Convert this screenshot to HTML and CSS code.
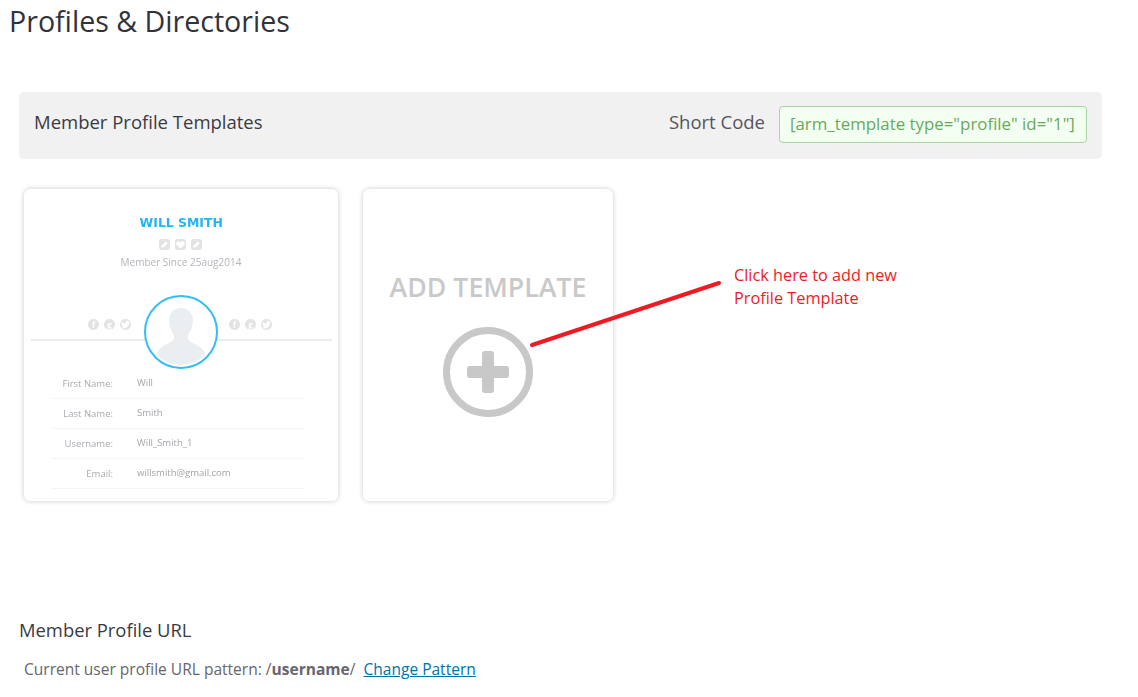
FILE: index.html
```html
<!DOCTYPE html>
<html lang="en">
<head>
<meta charset="utf-8">
<title>Profiles &amp; Directories</title>
<link rel="stylesheet" href="styles.css">
</head>
<body>
<svg class="defs" aria-hidden="true">
  <symbol id="i-bird" viewBox="0 0 12 12"><path d="M11 3.2c-.4.2-.8.3-1.200.3.4-.3.8-.6.9-1.100-.4.200-.9.4-1.300.5a2 2 0 0 0-3.500 1.900C4.200 4.700 2.700 3.900 1.700 2.700c-.5.900-.3 2.100.6 2.700-.3 0-.6-.100-.9-.300 0 1 .7 1.800 1.600 2-.3.100-.6.100-.9 0 .3.800 1 1.400 1.900 1.400C3.100 9.200 2 9.500 1 9.400c3.900 2.200 9-.1 9-5.300.4-.2.700-.5 1-.9z" fill="#fff"/></symbol>
  <symbol id="i-heart" viewBox="0 0 12 12"><path d="M6 10.500 1.800 6.200C.2 4.300 2.700 1.500 4.700 2.800L6 4l1.300-1.200c2-1.300 4.500 1.500 2.900 3.400z" fill="#fff"/></symbol>
  <symbol id="i-pen" viewBox="0 0 12 12"><path d="M2.500 9.500 3 7l4.500-4.500 2 2L5 9z" fill="#fff"/></symbol>
</svg>
<main class="page">
  <h1 class="page-title">Profiles &amp; Directories</h1>
  <section class="bar">
    <h2 class="bar-title">Member Profile Templates</h2>
    <div class="shortcode-group">
      <span class="shortcode-label">Short Code</span>
      <span class="shortcode">[arm_template type="profile" id="1"]</span>
    </div>
  </section>
  <section class="cards">
    <article class="card card-preview">
      <div class="p-name">WILL SMITH</div>
      <div class="p-badges">
        <span class="badge"><svg class="glyph"><use href="#i-pen"/></svg></span>
        <span class="badge"><svg class="glyph"><use href="#i-heart"/></svg></span>
        <span class="badge"><svg class="glyph"><use href="#i-pen"/></svg></span>
      </div>
      <div class="p-since">Member Since 25aug2014</div>
      <div class="p-hero">
        <div class="p-social p-social-left">
          <span class="dot">f</span><span class="dot">g</span><span class="dot"><svg class="glyph"><use href="#i-bird"/></svg></span>
        </div>
        <div class="avatar">
          <svg viewBox="0 0 70 70" class="avatar-svg" aria-hidden="true">
            <path d="M35 11c-7 0-12 5-12 12 0 6 2 11 5 15v3c0 3-5 5-9 7-4 2-7 5-8.500 9A33 33 0 0 0 59.500 57c-1.500-4-4.500-7-8.500-9-4-2-9-4-9-7v-3c3-4 5-9 5-15 0-7-5-12-12-12z" fill="#ebeef0"/>
          </svg>
        </div>
        <div class="p-social">
          <span class="dot">f</span><span class="dot">g</span><span class="dot"><svg class="glyph"><use href="#i-bird"/></svg></span>
        </div>
      </div>
      <dl class="p-fields">
        <div class="p-row"><dt>First Name:</dt><dd>Will</dd></div>
        <div class="p-row"><dt>Last Name:</dt><dd>Smith</dd></div>
        <div class="p-row"><dt>Username:</dt><dd>Will_Smith_1</dd></div>
        <div class="p-row"><dt>Email:</dt><dd>willsmith@gmail.com</dd></div>
      </dl>
    </article>
    <article class="card card-add">
      <div class="add-title">ADD TEMPLATE</div>
      <svg class="add-icon" viewBox="0 0 90 90" aria-hidden="true">
        <circle cx="45" cy="45" r="41.500" fill="none" stroke="#c8c8c8" stroke-width="7"/>
        <rect x="39" y="24" width="12" height="42" rx="3" fill="#c8c8c8"/>
        <rect x="24" y="39" width="42" height="12" rx="3" fill="#c8c8c8"/>
      </svg>
    </article>
  </section>
  <section class="url-section">
    <h2 class="url-title">Member Profile URL</h2>
    <p class="url-text">Current user profile URL pattern: /<b>username</b>/&nbsp; <a href="#" class="url-link">Change Pattern</a></p>
  </section>
  <svg class="arrow" viewBox="0 0 1138 697" aria-hidden="true">
    <line x1="532" y1="345" x2="719" y2="283" stroke="#ed1c24" stroke-width="4" stroke-linecap="round"/>
  </svg>
  <p class="note">Click here to add new<br>Profile Template</p>
</main>
</body>
</html>
```
FILE: styles.css
```css
* { box-sizing: border-box; }
html, body { margin: 0; padding: 0; background: #fff; }
body { font-family: "Open Sans", "Liberation Sans", sans-serif; color: #32323a; overflow: hidden; }
.defs { display: none; }
.page { position: relative; width: 1138px; height: 697px; }

.page-title {
  margin: 0;
  padding: 2px 0 0 9px;
  height: 92px;
  font-size: 28.6px;
  line-height: 38px;
  font-weight: 400;
  color: #32323a;
}

.bar {
  margin-left: 19px;
  width: 1083px;
  height: 67px;
  padding: 14px 15px 0;
  background: #f1f1f1;
  border-radius: 5px;
  display: flex;
  align-items: flex-start;
  justify-content: space-between;
}
.bar-title { margin: 4px 0 0; font-size: 18.5px; font-weight: 400; line-height: 24px; color: #3a3a44; }
.shortcode-group { display: flex; align-items: flex-start; gap: 14px; }
.shortcode-label { margin-top: 4px; font-size: 18.5px; line-height: 24px; color: #55555e; }
.shortcode {
  width: 308px;
  height: 37px;
  line-height: 34px;
  padding-left: 10px;
  font-size: 16.85px;
  white-space: nowrap;
  color: #6aa862;
  background: #f3fff0;
  border: 1px solid #a8d6a0;
  border-radius: 4px;
}

.cards { display: flex; gap: 25px; padding: 30px 0 0 24px; }
.card {
  height: 312px;
  background: #fff;
  border-radius: 6px;
  box-shadow: 0 0 5px rgba(0, 0, 0, .22);
}
.card-preview { width: 314px; padding-top: 26px; display: flex; flex-direction: column; align-items: center; }
.p-name {
  font-family: "DejaVu Sans", sans-serif;
  font-size: 12px;
  line-height: 16px;
  font-weight: 700;
  transform: scaleX(1.035);
  color: #1fb6f5;
}
.p-badges { display: flex; gap: 5px; margin-top: 8px; padding-right: 1px; filter: blur(.3px); }
.badge { width: 11px; height: 11px; border-radius: 3px; background: #e3e3e3; }
.glyph { display: block; width: 11px; height: 11px; }
.p-since { margin-top: 5px; font-size: 10px; line-height: 14px; color: #b4b4bc; filter: blur(.25px); }
.p-hero {
  position: relative;
  align-self: stretch;
  margin: 26px 6px 0 7px;
  padding-right: 3px;
  height: 74px;
  display: flex;
  align-items: flex-start;
  justify-content: center;
  gap: 11px;
}
.p-hero::after {
  content: "";
  position: absolute;
  left: 0;
  right: 0;
  top: 44px;
  height: 2px;
  background: #ebeef0;
}
.p-social { display: flex; gap: 5px; margin-top: 24px; filter: blur(.3px); }
.p-social-left { margin-right: 2px; }
.dot {
  display: block;
  width: 11px;
  height: 11px;
  border-radius: 50%;
  background: #e3e3e3;
  color: #fff;
  font-size: 8px;
  line-height: 11px;
  font-weight: 700;
  text-align: center;
}
.avatar {
  position: relative;
  z-index: 1;
  width: 74px;
  height: 74px;
  border: 2px solid #35bdf5;
  border-radius: 50%;
  background: #fff;
  overflow: hidden;
}
.avatar-svg { display: block; width: 70px; height: 70px; }

.p-fields { align-self: stretch; margin: 0 34px 0 28px; filter: blur(.25px); }
.p-row {
  display: flex;
  align-items: center;
  height: 30px;
  border-bottom: 1px solid #f5f5f5;
  font-size: 9.500px;
  line-height: 12px;
}
.p-row dt { width: 61px; text-align: right; color: #a9a9b0; }
.p-row dd { margin: -2px 0 0 24px; color: #a3a3aa; }

.card-add { width: 250px; display: flex; flex-direction: column; align-items: center; padding-top: 79px; }
.add-title { font-size: 26.700px; line-height: 38px; font-weight: 600; color: #c9c9c9; white-space: nowrap; }
.add-icon { display: block; width: 90px; height: 90px; margin-top: 21px; }

.url-section { padding: 117px 0 0 19px; }
.url-title { margin: 0; font-size: 18.400px; line-height: 24px; font-weight: 400; color: #3a3a44; }
.url-text { margin: 17px 0 0 5px; font-size: 15.540px; line-height: 20px; color: #66666e; }
.url-text b { font-weight: 700; }
.url-link { color: #0073aa; text-decoration: underline; }

.arrow { position: absolute; left: 0; top: 0; width: 1138px; height: 697px; pointer-events: none; }
.note {
  position: absolute;
  left: 734px;
  top: 264px;
  margin: 0;
  font-size: 16.300px;
  line-height: 23px;
  color: #ed1c24;
}
```
